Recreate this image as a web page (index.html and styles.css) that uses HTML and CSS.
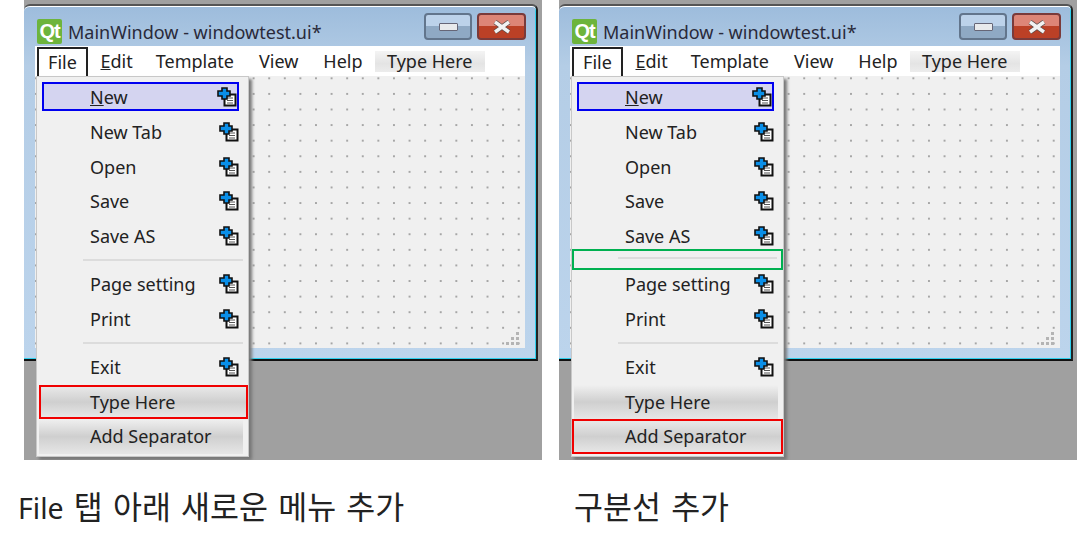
FILE: index.html
```html
<!DOCTYPE html>
<html lang="ko">
<head>
  <meta charset="utf-8">
  <title>MainWindow 메뉴 추가</title>
  <link rel="stylesheet" href="styles.css">
</head>
<body>

  <!-- menu icon, used on every action -->
  <svg class="defs" width="0" height="0">
    <symbol id="act" viewBox="0 0 20 20">
      <rect x="7.5" y="7.5" width="11" height="11" fill="#fff" stroke="#111" stroke-width="2"/>
      <path d="M10 11h6M10 13.500h6M10 16h6" stroke="#555" stroke-width="1"/>
      <path d="M5 1h5v3h3v5h-3v3H5V9H1V4h4z" fill="#0a8fe8" stroke="#111" stroke-width="1.600"/>
    </symbol>
    <symbol id="x" viewBox="0 0 20 14">
      <path d="M3 2l14 10M17 2L3 12" stroke="#5a4a48" stroke-width="5"/>
      <path d="M3 2l14 10M17 2L3 12" stroke="#f2f2f2" stroke-width="3.400"/>
    </symbol>
  </svg>

  <div class="page">

    <div class="figure">
      <div class="shot">
        <div class="window">
          <div class="titlebar">
            <span class="qt">Qt</span>
            <span class="wintitle">MainWindow - windowtest.ui*</span>
            <span class="btn-min"><i></i></span>
            <span class="btn-close"><svg class="ico-x"><use href="#x"/></svg></span>
          </div>
          <div class="menubar">
            <span class="tab tab-open">File</span>
            <span class="tab"><u>E</u>dit</span>
            <span class="tab tab-tpl">Template</span>
            <span class="tab">View</span>
            <span class="tab">Help</span>
            <span class="tab tab-new">Type Here</span>
          </div>
          <div class="canvas"><div class="grip"></div></div>
        </div>
        <div class="menu">
          <div class="item item-blue"><span><u>N</u>ew</span><svg class="ico"><use href="#act"/></svg></div>
          <div class="item"><span>New Tab</span><svg class="ico"><use href="#act"/></svg></div>
          <div class="item"><span>Open</span><svg class="ico"><use href="#act"/></svg></div>
          <div class="item"><span>Save</span><svg class="ico"><use href="#act"/></svg></div>
          <div class="item"><span>Save AS</span><svg class="ico"><use href="#act"/></svg></div>
          <div class="sep"></div>
          <div class="item"><span>Page setting</span><svg class="ico"><use href="#act"/></svg></div>
          <div class="item"><span>Print</span><svg class="ico"><use href="#act"/></svg></div>
          <div class="sep"></div>
          <div class="item"><span>Exit</span><svg class="ico"><use href="#act"/></svg></div>
          <div class="item item-new item-red"><span>Type Here</span></div>
          <div class="item item-new"><span>Add Separator</span></div>
        </div>
      </div>
      <p class="caption"><span class="latin">File</span> 탭 아래 새로운 메뉴 추가</p>
    </div>

    <div class="figure">
      <div class="shot">
        <div class="window">
          <div class="titlebar">
            <span class="qt">Qt</span>
            <span class="wintitle">MainWindow - windowtest.ui*</span>
            <span class="btn-min"><i></i></span>
            <span class="btn-close"><svg class="ico-x"><use href="#x"/></svg></span>
          </div>
          <div class="menubar">
            <span class="tab tab-open">File</span>
            <span class="tab"><u>E</u>dit</span>
            <span class="tab tab-tpl">Template</span>
            <span class="tab">View</span>
            <span class="tab">Help</span>
            <span class="tab tab-new">Type Here</span>
          </div>
          <div class="canvas"><div class="grip"></div></div>
        </div>
        <div class="menu">
          <div class="item item-blue"><span><u>N</u>ew</span><svg class="ico"><use href="#act"/></svg></div>
          <div class="item"><span>New Tab</span><svg class="ico"><use href="#act"/></svg></div>
          <div class="item"><span>Open</span><svg class="ico"><use href="#act"/></svg></div>
          <div class="item"><span>Save</span><svg class="ico"><use href="#act"/></svg></div>
          <div class="item"><span>Save AS</span><svg class="ico"><use href="#act"/></svg></div>
          <div class="sep sep-green"></div>
          <div class="item"><span>Page setting</span><svg class="ico"><use href="#act"/></svg></div>
          <div class="item"><span>Print</span><svg class="ico"><use href="#act"/></svg></div>
          <div class="sep"></div>
          <div class="item"><span>Exit</span><svg class="ico"><use href="#act"/></svg></div>
          <div class="item item-new"><span>Type Here</span></div>
          <div class="item item-new item-red item-wide"><span>Add Separator</span></div>
        </div>
      </div>
      <p class="caption">구분선 추가</p>
    </div>

  </div>
</body>
</html>
```

FILE: styles.css
```css
body {
  margin: 0;
  background-color: #fff;
  font-family: "Noto Sans", "Noto Sans CJK KR", sans-serif;
  color: #222;
  overflow: hidden;
}

.defs {
  position: absolute;
}

.page {
  display: flex;
  gap: 17px;
  padding-left: 24px;
}

.figure {
  width: 518px;
}

.shot {
  position: relative;
  height: 460px;
  padding-top: 4px;
  box-sizing: border-box;
  background-color: #a0a0a0;
  overflow: hidden;
}

/* window frame */
.window {
  box-sizing: border-box;
  width: 514px;
  height: 357px;
  padding: 4px 11px 11px 11px;
  border-top: 2px solid #555;
  border-right: 2px solid #222;
  border-bottom: 2px solid #111;
  border-radius: 6px 6px 0 0;
  background: linear-gradient(#9dbcdc 0, #b4cde6 60px, #bcd4ec 100%);
  box-shadow: inset 0 1px 0 #fff, inset -1px -1px 0 #2fd0ee;
  display: flex;
  flex-direction: column;
}

.titlebar {
  display: flex;
  align-items: flex-start;
  height: 36px;
  flex-shrink: 0;
}

.qt {
  width: 25px;
  height: 25px;
  margin: 9px 0 0 2px;
  background-color: #6db43c;
  border-radius: 2px;
  color: #fff;
  font-family: "Liberation Sans", sans-serif;
  font-size: 20px;
  font-weight: bold;
  line-height: 25px;
  text-align: center;
  letter-spacing: -1px;
}

.wintitle {
  margin: 8px 0 0 6px;
  font-size: 18px;
  line-height: 28px;
  color: #2a2a3a;
  flex: 1;
}

.btn-min,
.btn-close {
  box-sizing: border-box;
  height: 27px;
  margin-top: 3px;
  border-radius: 4px;
  display: flex;
  align-items: center;
  justify-content: center;
}

.btn-min {
  width: 48px;
  margin-right: 5px;
  border: 2px solid #62758c;
  background: linear-gradient(#bcd2ea 50%, #8fa9c4 50%);
}

.btn-min i {
  display: block;
  width: 17px;
  height: 6px;
  background-color: #e8eaec;
  border: 1px solid #667;
  border-radius: 1px;
}

.btn-close {
  width: 49px;
  margin-right: -1px;
  border: 2px solid #7a3a3a;
  background: linear-gradient(#dd8577 50%, #bb4026 50%);
}

.ico-x {
  width: 20px;
  height: 14px;
}

.menubar {
  display: flex;
  align-items: center;
  height: 30px;
  padding-left: 2px;
  background-color: #fff;
  flex-shrink: 0;
  font-size: 18px;
}

.tab {
  padding: 0 12.500px;
  white-space: nowrap;
}

.tab-tpl {
  margin-left: -2px;
}

.tab-open {
  box-sizing: border-box;
  height: 29px;
  width: 51px;
  margin-top: 1px;
  line-height: 26px;
  text-align: center;
  padding: 0;
  border: 2px solid #222;
  border-bottom: none;
}

.tab-new {
  height: 21px;
  padding: 0 12px;
  line-height: 21px;
  background: linear-gradient(#f4f4f4, #e4e4e4 60%, #ececec);
}

.canvas {
  position: relative;
  flex: 1;
  background-color: #f0f0f0;
  background-image: radial-gradient(circle, #a6a6a6 0.9px, transparent 1.1px);
  background-size: 15.6px 15.6px;
  background-position: -7.5px -5.5px;
}

/* one dot, the others are its shadows */
.grip {
  position: absolute;
  right: 6px;
  bottom: 3px;
  width: 3px;
  height: 3px;
  background-color: #b4b4b4;
  box-shadow: -5px 0 #b4b4b4, -10px 0 #b4b4b4, 0 -5px #b4b4b4, -5px -5px #b4b4b4, 0 -10px #b4b4b4;
}

/* popup menu */
.menu {
  position: absolute;
  left: 12px;
  top: 76px;
  box-sizing: border-box;
  width: 213px;
  height: 381px;
  padding: 5px 2px 0;
  background-color: #f0f0f0;
  border: 1px solid #c8c8c8;
  box-shadow: 3px 3px 3px #777;
  font-size: 18px;
}

.item {
  box-sizing: border-box;
  display: flex;
  align-items: center;
  justify-content: space-between;
  height: 34.5px;
  padding: 0 7px 0 51px;
  white-space: nowrap;
}

.ico {
  width: 20px;
  height: 20px;
}

.item-blue {
  height: 29px;
  margin: 0 7px 4px 3px;
  padding: 0 0 0 46px;
  background-color: #d4d4f0;
  border: 2px solid #0000f0;
}

.item-new {
  margin-right: 3px;
  background: linear-gradient(#f0f0f0, #cfcfcf 50%, #e6e6e6);
}

.item-red {
  margin: 0 -2px 0 0;
  padding-left: 49px;
  border: 2px solid #f00000;
  background: linear-gradient(#e8e8e8, #cfcfcf 50%, #e6e6e6);
}

.item-wide {
  margin-left: -2px;
  padding-left: 51px;
}

.sep {
  box-sizing: border-box;
  height: 14px;
  margin: 0 0 0 44px;
  position: relative;
}

.sep::after {
  content: "";
  position: absolute;
  left: 0;
  right: 3px;
  top: 5.500px;
  height: 2px;
  background-color: #dcdcdc;
}

.sep-green {
  height: 21px;
  margin: -4.500px -2px -2.500px -2px;
  border: 2px solid #00b050;
}

.sep-green::after {
  left: 44px;
  right: 4px;
  top: 6px;
}

.caption {
  margin: 27px 0 0 -6px;
  font-size: 31.500px;
  line-height: 40px;
  word-spacing: 2px;
  color: #222;
  white-space: nowrap;
}

.latin {
  font-size: 28.500px;
}

.figure + .figure .caption {
  margin-left: 15px;
}
```
